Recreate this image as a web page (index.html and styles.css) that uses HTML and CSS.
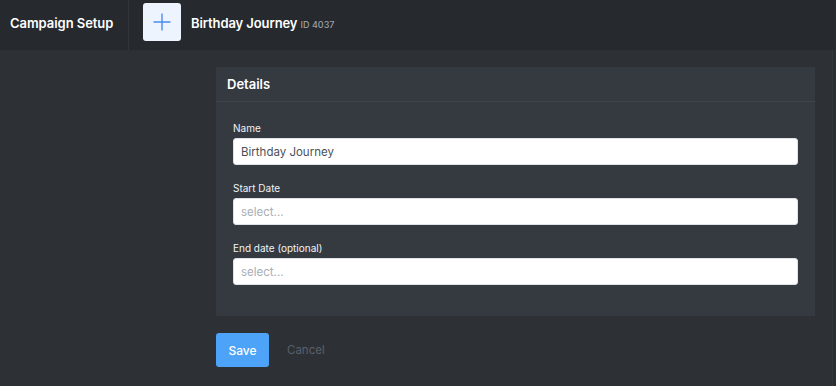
FILE: index.html
```html
<!DOCTYPE html>
<html>
<head>
<meta charset="utf-8">
<link rel="stylesheet" href="styles.css">
</head>
<body>
<header class="topbar">
  <div class="brand">Campaign Setup</div>
  <div class="title-area">
    <div class="icon-box">
      <svg width="20" height="20" viewBox="0 0 20 20"><path d="M10 1.5V18.5M1.5 10H18.5" stroke="#4a8cf0" stroke-width="1.4" fill="none"/></svg>
    </div>
    <div class="title">Birthday Journey <span class="id">ID 4037</span></div>
  </div>
</header>
<div class="body">
  <main class="main">
    <section class="panel">
      <div class="panel-head">Details</div>
      <div class="panel-body">
        <div class="field">
          <label class="label">Name</label>
          <div class="input">Birthday Journey</div>
        </div>
        <div class="field">
          <label class="label">Start Date</label>
          <div class="input placeholder">select...</div>
        </div>
        <div class="field">
          <label class="label">End date (optional)</label>
          <div class="input placeholder">select...</div>
        </div>
      </div>
    </section>
    <div class="actions">
      <button class="btn-save">Save</button>
      <button class="btn-cancel">Cancel</button>
    </div>
  </main>
  <aside class="rail"></aside>
</div>
</body>
</html>
```
FILE: styles.css
```css
* { box-sizing: border-box; }
html, body { margin: 0; padding: 0; }
body {
  width: 836px;
  height: 386px;
  background: #2d3136;
  font-family: Inter, "Noto Sans", sans-serif;
  color: #fff;
  overflow: hidden;
}
.topbar {
  height: 50px;
  background: #26292e;
  display: flex;
  align-items: stretch;
}
.brand {
  width: 129px;
  border-right: 1px solid #31353a;
  display: flex;
  align-items: center;
  padding-left: 10px;
  padding-bottom: 5px;
  font-size: 13px;
  font-weight: 600;
  letter-spacing: -0.05px;
}
.title-area {
  display: flex;
  align-items: flex-start;
  padding-left: 14px;
  padding-top: 3px;
}
.icon-box {
  width: 38px;
  height: 38px;
  background: #eef4fd;
  border-radius: 3px;
  display: flex;
  align-items: center;
  justify-content: center;
}
.title {
  margin-left: 10px;
  margin-top: 12px;
  font-size: 13px;
  font-weight: 600;
  letter-spacing: -0.1px;
}
.id {
  font-size: 9px;
  font-weight: 500;
  color: #9aa0a8;
  letter-spacing: 0;
}
.body {
  display: flex;
  height: 336px;
}
.main {
  flex: 1;
  padding: 17px 17px 0 216px;
}
.rail {
  width: 4px;
  background: #2a2e32;
  border-left: 1px solid #31363b;
}
.panel {
  background: #353a41;
  width: 599px;
  height: 249px;
}
.panel-head {
  height: 35px;
  border-bottom: 1px solid #40454c;
  padding-left: 11px;
  display: flex;
  align-items: center;
  font-size: 13px;
  font-weight: 600;
}
.panel-body {
  padding: 19px 17px 0 17px;
  display: flex;
  flex-direction: column;
  gap: 16px;
}
.field {
  display: flex;
  flex-direction: column;
}
.label {
  font-size: 10px;
  font-weight: 400;
  color: #f1f3f5;
  height: 14px;
  line-height: 14px;
  margin-bottom: 3px;
}
.input {
  height: 27px;
  background: #fff;
  border-radius: 3px;
  border: 1px solid #dfe3e8;
  padding-left: 7px;
  display: flex;
  align-items: center;
  font-size: 11.5px;
  color: #4a5058;
}
.input.placeholder {
  color: #a9aeb6;
}
.actions {
  margin-top: 17px;
  display: flex;
  align-items: center;
}
.btn-save {
  width: 53px;
  height: 34px;
  background: #4da3f7;
  border: none;
  border-radius: 3px;
  color: #fff;
  font-family: inherit;
  font-size: 12px;
  font-weight: 500;
  padding: 0;
}
.btn-cancel {
  background: none;
  border: none;
  margin-left: 18px;
  padding: 0;
  color: #59606a;
  font-family: inherit;
  font-size: 11.5px;
  font-weight: 400;
}
```
